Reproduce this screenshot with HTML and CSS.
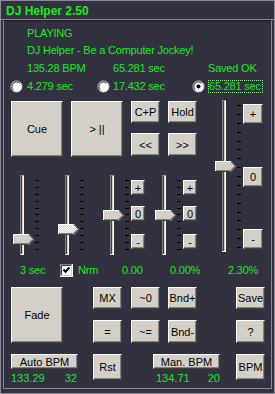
FILE: index.html
```html
<!DOCTYPE html>
<html><head>
<meta charset="utf-8">
<title>DJ Helper 2.50</title>
<link rel="stylesheet" href="styles.css">
</head>
<body>
<div class="win">
  <div class="title">DJ Helper 2.50</div>
  <div class="client">
    <div class="info">
      <div class="r1">PLAYING</div>
      <div class="r2">DJ Helper - Be a Computer Jockey!</div>
      <div class="r3"><span class="c1">135.28 BPM</span><span class="c2">65.281 sec</span><span>Saved OK</span></div>
    </div>

    <div class="radios">
      <div class="rad c1">
        <svg class="radio" viewBox="0 0 13 13"><circle cx="6.5" cy="6.5" r="5.5" fill="#fff" stroke="#d4d0c8"/><path d="M2.6 10.4A5.5 5.5 0 0 1 10.4 2.6" fill="none" stroke="#808080"/><path d="M3.3 9.7A4.5 4.5 0 0 1 9.7 3.3" fill="none" stroke="#404040"/></svg>
        <span>4.279 sec</span>
      </div>
      <div class="rad c2">
        <svg class="radio" viewBox="0 0 13 13"><circle cx="6.5" cy="6.5" r="5.5" fill="#fff" stroke="#d4d0c8"/><path d="M2.6 10.4A5.5 5.5 0 0 1 10.4 2.6" fill="none" stroke="#808080"/><path d="M3.3 9.7A4.5 4.5 0 0 1 9.7 3.3" fill="none" stroke="#404040"/></svg>
        <span>17.432 sec</span>
      </div>
      <div class="rad">
        <svg class="radio" viewBox="0 0 13 13"><circle cx="6.5" cy="6.5" r="5.5" fill="#fff" stroke="#d4d0c8"/><path d="M2.6 10.4A5.5 5.5 0 0 1 10.4 2.6" fill="none" stroke="#808080"/><path d="M3.3 9.7A4.5 4.5 0 0 1 9.7 3.3" fill="none" stroke="#404040"/><circle cx="6.5" cy="6.5" r="2" fill="#000"/></svg>
        <span class="focus">65.281 sec</span>
      </div>
    </div>

    <div class="controls">
      <div class="left">
        <div class="top">
          <button class="btn big">Cue</button>
          <button class="btn big">&gt; ||</button>
          <div class="pair">
            <button class="btn">C+P</button>
            <button class="btn">Hold</button>
            <button class="btn">&lt;&lt;</button>
            <button class="btn">&gt;&gt;</button>
          </div>
        </div>

        <div class="sliders">
          <div class="slider">
            <div class="rail">
              <div class="track"></div>
              <svg class="thumb" style="top:59px" viewBox="0 0 21 11"><path d="M0 0H16L21 5.5L16 11H0Z" fill="#d4d0c8"/><path d="M0.5 10.5V0.5H16" fill="none" stroke="#fff"/><path d="M16 0.5L20.5 5.2L15.7 10.5H0" fill="none" stroke="#404040"/><path d="M1 9.5H15.3L19.2 5.5" fill="none" stroke="#808080"/></svg>
            </div>
            <div class="ticks"><i></i><i></i><i></i><i></i><i></i><i></i><i></i><i></i><i></i><i></i><i></i></div>
          </div>

          <div class="slider s2">
            <div class="rail">
              <div class="track"></div>
              <svg class="thumb" style="top:49px" viewBox="0 0 21 11"><defs><pattern id="dith" width="2" height="2" patternUnits="userSpaceOnUse"><rect width="2" height="2" fill="#d4d0c8"/><rect width="1" height="1" fill="#fff"/><rect x="1" y="1" width="1" height="1" fill="#fff"/></pattern></defs><path d="M0 0H16L21 5.5L16 11H0Z" fill="url(#dith)"/><path d="M0.5 10.5V0.5H16" fill="none" stroke="#fff"/><path d="M16 0.5L20.5 5.2L15.7 10.5H0" fill="none" stroke="#404040"/><path d="M1 9.5H15.3L19.2 5.5" fill="none" stroke="#808080"/></svg>
            </div>
            <div class="ticks"><i></i><i></i><i></i><i></i><i></i><i></i><i></i><i></i><i></i><i></i><i></i></div>
          </div>

          <div class="slider s3">
            <div class="rail">
              <div class="track"></div>
              <svg class="thumb" style="top:35px" viewBox="0 0 21 11"><path d="M0 0H16L21 5.5L16 11H0Z" fill="#d4d0c8"/><path d="M0.5 10.5V0.5H16" fill="none" stroke="#fff"/><path d="M16 0.5L20.5 5.2L15.7 10.5H0" fill="none" stroke="#404040"/><path d="M1 9.5H15.3L19.2 5.5" fill="none" stroke="#808080"/></svg>
            </div>
            <div class="ticks"><i></i><i></i><i></i><i></i><i></i><i></i><i></i><i></i><i></i><i></i><i></i></div>
          </div>
          <div class="pm">
            <button class="btn plus">+</button>
            <button class="btn zero">0</button>
            <button class="btn minus">-</button>
          </div>

          <div class="slider s4">
            <div class="rail">
              <div class="track"></div>
              <svg class="thumb" style="top:35px" viewBox="0 0 21 11"><path d="M0 0H16L21 5.5L16 11H0Z" fill="#d4d0c8"/><path d="M0.5 10.5V0.5H16" fill="none" stroke="#fff"/><path d="M16 0.5L20.5 5.2L15.7 10.5H0" fill="none" stroke="#404040"/><path d="M1 9.5H15.3L19.2 5.5" fill="none" stroke="#808080"/></svg>
            </div>
            <div class="ticks"><i></i><i></i><i></i><i></i><i></i><i></i><i></i><i></i><i></i><i></i><i></i></div>
          </div>
          <div class="pm">
            <button class="btn plus">+</button>
            <button class="btn zero">0</button>
            <button class="btn minus">-</button>
          </div>
        </div>
      </div>

      <div class="right">
        <div class="rail tall">
          <div class="track"></div>
          <svg class="thumb" style="top:61px" viewBox="0 0 21 11"><path d="M0 0H16L21 5.5L16 11H0Z" fill="#d4d0c8"/><path d="M0.5 10.5V0.5H16" fill="none" stroke="#fff"/><path d="M16 0.5L20.5 5.2L15.7 10.5H0" fill="none" stroke="#404040"/><path d="M1 9.5H15.3L19.2 5.5" fill="none" stroke="#808080"/></svg>
        </div>
        <div class="ticks tall"><i></i><i></i><i></i><i></i><i></i><i></i><i></i><i></i><i></i><i></i><i></i><i></i><i></i><i></i><i></i><i></i><i></i></div>
        <div class="pm big">
          <button class="btn plus">+</button>
          <button class="btn zero">0</button>
          <button class="btn minus">-</button>
        </div>
      </div>
    </div>

    <div class="labels">
      <span class="l1">3 sec</span>
      <svg class="chk" viewBox="0 0 13 13"><rect width="13" height="13" fill="#fff"/><path d="M0.5 12V0.5H12" fill="none" stroke="#808080"/><path d="M1.5 11V1.5H11" fill="none" stroke="#404040"/><path d="M0 12.5H12.5V0" fill="none" stroke="#fff"/><path d="M1 11.5H11.5V1" fill="none" stroke="#d4d0c8"/><path d="M3.5 5.5L5.5 7.8L9.5 3.5" fill="none" stroke="#000" stroke-width="2"/></svg>
      <span class="l2">Nrm</span>
      <span class="l3">0.00</span>
      <span class="l4">0.00%</span>
      <span>2.30%</span>
    </div>

    <div class="b1">
      <button class="btn big">Fade</button>
      <div class="grid3">
        <button class="btn">MX</button>
        <button class="btn">~0</button>
        <button class="btn">Bnd+</button>
        <button class="btn">=</button>
        <button class="btn">~=</button>
        <button class="btn">Bnd-</button>
      </div>
      <div class="col">
        <button class="btn">Save</button>
        <button class="btn">?</button>
      </div>
    </div>

    <div class="b2">
      <div class="bpm auto">
        <button class="btn wide">Auto BPM</button>
        <div class="nums"><span>133.29</span><span>32</span></div>
      </div>
      <button class="btn tallbtn rst">Rst</button>
      <div class="bpm man">
        <button class="btn wide">Man. BPM</button>
        <div class="nums"><span>134.71</span><span>20</span></div>
      </div>
      <button class="btn tallbtn last">BPM</button>
    </div>
  </div>
</div>
</body>
</html>
```

FILE: styles.css
```css
body { margin:0; background:#31313f; }

.win {
  width:275px;
  height:394px;
  box-sizing:border-box;
  background:#31313f;
  border:1px solid #8a8a98;
  font-family:"Liberation Sans", Arial, sans-serif;
  font-size:11px;
  color:#1ee81e;
}

.title {
  height:17px;
  padding:1px 0 0 5px;
  line-height:18px;
  font-size:12px;
  font-weight:bold;
  border-bottom:1px solid #8a8a98;
}

.client {
  margin:0 2px;
  height:367px;
  border:1px solid;
  border-color:#1a1a24 #8a8a98 #8a8a98 #8a8a98;
}

/* status text */
.info { padding:3px 0 0 23px; letter-spacing:-0.2px; }
.r1 { height:18px; line-height:18px; }
.r2 { height:17px; line-height:17px; }
.r3 { height:18px; line-height:18px; display:flex; }
.r3 .c1 { width:86px; }
.r3 .c2 { width:95px; }

.radios { display:flex; height:18px; padding-left:6px; letter-spacing:-0.2px; }
.rad { display:flex; align-items:center; gap:3px; }
.rad.c1 { width:87px; gap:4px; }
.rad.c2 { width:95px; }
.radio { width:13px; height:13px; }
.focus { border:1px dotted #9ae89a; padding:0 1px 0 0; line-height:11px; }

/* buttons */
.btn {
  display:block;
  box-sizing:border-box;
  width:29px;
  height:22px;
  padding:0;
  margin:0;
  background:#d4d0c8;
  border:1px solid;
  border-color:#fff #404040 #404040 #fff;
  box-shadow:inset -1px -1px #808080;
  font-family:"Liberation Sans", Arial, sans-serif;
  font-size:11px;
  color:#000;
}
.btn.big { width:52px; height:56px; margin-right:8px; }

/* transport + sliders */
.controls { display:flex; margin-top:5px; }
.left { width:186px; padding:1px 0 0 7px; }
.top { display:flex; height:56px; }
.pair {
  display:grid;
  grid-template-columns:29px 29px;
  grid-template-rows:22px 23px;
  column-gap:8px;
  row-gap:10px;
}
.pair .btn, .grid3 .btn { height:100%; }

.sliders { display:flex; margin-top:18px; padding-left:2px; }
.slider { display:flex; }
.slider.s2, .slider.s3 { margin-left:19px; }
.slider.s4 { margin-left:10px; }

.rail { position:relative; width:22px; height:80px; }
.rail.tall { height:152px; }
.track {
  box-sizing:border-box;
  width:4px;
  height:100%;
  margin-left:7px;
  border:1px solid;
  border-color:#808080 #fff #fff #808080;
  background:linear-gradient(to right, #404040 1px, #d4d0c8 1px);
}
.thumb { position:absolute; left:0; width:21px; height:11px; }

.ticks {
  display:flex;
  flex-direction:column;
  justify-content:space-between;
  width:4px;
  height:70px;
  margin-top:5px;
}
.ticks.tall { height:143px; }
.ticks i { display:block; height:1px; background:#000; }

.pm { display:flex; flex-direction:column; width:14px; margin-left:2px; padding-top:5px; }
.pm .btn { width:14px; height:15px; }
.pm .zero { margin-top:11px; }
.pm .minus { margin-top:13px; }

.right { display:flex; margin-left:18px; }
.pm.big { width:20px; padding-top:4px; }
.pm.big .btn { width:20px; height:20px; }
.pm.big .zero { margin-top:43px; }
.pm.big .minus { margin-top:42px; }

/* value row */
.labels {
  display:flex;
  align-items:center;
  height:14px;
  margin-top:8px;
  padding-left:16px;
  letter-spacing:-0.2px;
}
.labels .l1 { width:40px; }
.chk { width:13px; height:13px; margin-right:5px; }
.labels .l2 { width:44px; }
.labels .l3 { width:48px; }
.labels .l4 { width:58px; }

/* lower block */
.b1 { display:flex; margin-top:10px; padding-left:7px; }
.b1 .btn.big { margin-right:30px; }
.grid3 {
  display:grid;
  grid-template-columns:38px 37px 29px;
  grid-template-rows:22px 23px;
  row-gap:11px;
}
.grid3 .btn { width:29px; }
.col { display:flex; flex-direction:column; margin-left:39px; }
.col .btn + .btn { margin-top:11px; height:23px; }

.b2 { display:flex; margin-top:11px; padding-left:7px; }
.bpm { width:67px; }
.btn.wide { width:67px; height:15px; line-height:12px; }
.nums { display:flex; justify-content:space-between; height:14px; line-height:14px; margin-top:2px; padding-right:1px; }
.man .nums { padding-left:3px; padding-right:0; }
.btn.tallbtn { height:26px; }
.rst { margin-left:15px; }
.man { margin-left:31px; }
.last { margin-left:16px; }
```
